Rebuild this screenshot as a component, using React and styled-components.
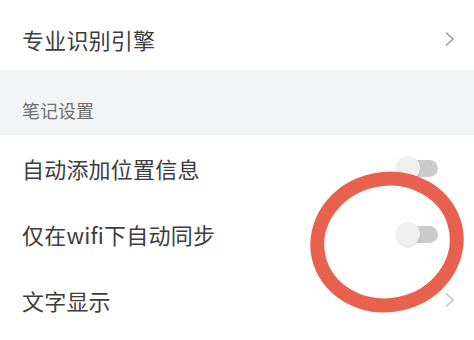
import React from 'react'
import styled, { createGlobalStyle } from 'styled-components'

const GlobalStyle = createGlobalStyle`
  html, body {
    margin: 0;
    padding: 0;
    background: #fff;
  }
  body {
    font-family: "Noto Sans CJK SC", "Noto Sans", sans-serif;
    -webkit-font-smoothing: antialiased;
  }
`

const Page = styled.div`
  position: relative;
  width: 474px;
  height: 340px;
  overflow: hidden;
  background: #fff;
`

const Row = styled.div`
  display: flex;
  align-items: center;
  justify-content: space-between;
  box-sizing: border-box;
  height: ${(p) => p.height || 66}px;
  padding: ${(p) => p.padTop || 0}px 18px 0 22px;
`

const Label = styled.span`
  font-size: 22px;
  color: #3d3d3d;
  letter-spacing: 0.2px;
`

const SectionHeader = styled.div`
  box-sizing: border-box;
  height: 65px;
  padding: 29px 22px 0;
  background: #f3f4f5;
  font-size: 18px;
  color: #6f6f6f;
  line-height: 22px;
`

const Chevron = styled.svg`
  width: 12px;
  height: 16px;
  opacity: ${(p) => (p.faded ? 0.6 : 1)};
`

const Toggle = styled.div`
  position: relative;
  width: 42px;
  height: 24px;
  margin-right: 18px;

  &::before {
    content: '';
    position: absolute;
    right: 0;
    top: 4px;
    width: 36px;
    height: 17px;
    border-radius: 9px;
    background: #cbcbcb;
  }

  &::after {
    content: '';
    position: absolute;
    left: 0;
    top: 0;
    width: 24px;
    height: 24px;
    border-radius: 50%;
    background: #efefef;
    box-shadow: 0 1px 2px rgba(0, 0, 0, 0.15);
  }
`

const Marker = styled.svg`
  position: absolute;
  left: 0;
  top: 0;
  width: 474px;
  height: 340px;
  pointer-events: none;
`

const ChevronIcon = ({ faded }) => (
  <Chevron faded={faded} viewBox="0 0 12 16">
    <path d="M2 1.5 L9 8 L2 14.5" fill="none" stroke="#9a9a9a" strokeWidth="1.6" />
  </Chevron>
)

export default function App() {
  return (
    <>
      <GlobalStyle />
      <Page>
        <Row height={70} padTop={8}>
          <Label>专业识别引擎</Label>
          <ChevronIcon />
        </Row>
        <SectionHeader>笔记设置</SectionHeader>
        <Row>
          <Label>自动添加位置信息</Label>
          <Toggle />
        </Row>
        <Row>
          <Label>仅在wifi下自动同步</Label>
          <Toggle />
        </Row>
        <Row>
          <Label>文字显示</Label>
          <ChevronIcon faded />
        </Row>
        <Marker viewBox="0 0 474 340">
          <ellipse
            cx="387"
            cy="242"
            rx="70"
            ry="63"
            fill="none"
            stroke="#e8604e"
            strokeWidth="14"
            transform="rotate(-12 387 242)"
          />
        </Marker>
      </Page>
    </>
  )
}
